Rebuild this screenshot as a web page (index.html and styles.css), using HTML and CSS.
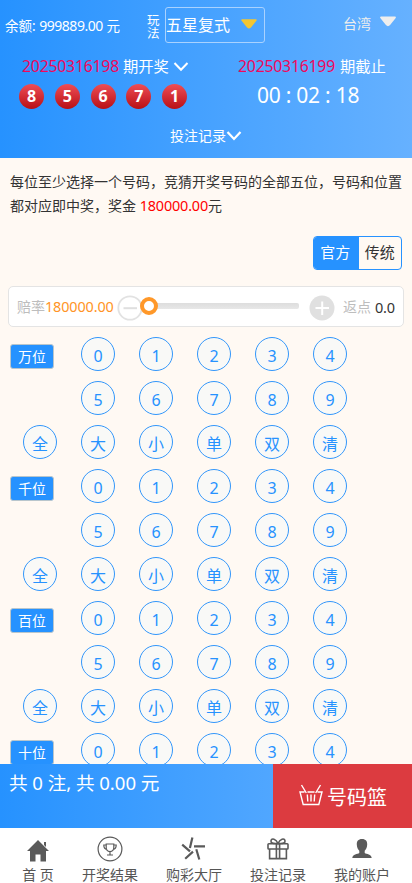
FILE: index.html
```html
<!DOCTYPE html>
<html lang="zh-CN">
<head>
<meta charset="utf-8">
<meta name="viewport" content="width=device-width, initial-scale=1">
<title>五星复式</title>
<link rel="stylesheet" href="styles.css">
</head>
<body>
<header class="header">
  <div class="topbar">
    <span class="balance">余额: <span class="balance-num">999889.00</span> 元</span>
    <span class="play-label">玩法</span>
    <div class="play-select"><span>五星复式</span><svg class="tri" width="18" height="10" viewBox="0 0 18 10"><path d="M2 1H16L10.4 8Q9 9.3 7.6 8Z" fill="#f4c632" stroke="#f4c632" stroke-width="1.5" stroke-linejoin="round"/></svg></div>
    <div class="region"><span>台湾</span><svg width="18" height="11" viewBox="0 0 18 11"><path d="M2 1.5H16L10.4 8.5Q9 10 7.6 8.5Z" fill="#eee" stroke="#eee" stroke-width="1.8" stroke-linejoin="round"/></svg></div>
  </div>
  <div class="issues">
    <div class="issue issue-last">
      <div class="issue-title"><span class="issue-no">20250316198</span><span>期开奖</span><svg class="chev" width="16" height="11" viewBox="0 0 16 11"><path d="M1.5 2L8 8.7L14.5 2" fill="none" stroke="#fff" stroke-width="2"/></svg></div>
      <div class="balls"><b>8</b><b>5</b><b>6</b><b>7</b><b>1</b></div>
    </div>
    <div class="issue issue-next">
      <div class="issue-title"><span class="issue-no">20250316199</span><span>期截止</span></div>
      <div class="clock">00 : 02 : 18</div>
    </div>
  </div>
  <div class="records"><span>投注记录</span><svg width="16" height="12" viewBox="0 0 16 12"><path d="M1.5 2L8 9L14.5 2" fill="none" stroke="#fff" stroke-width="2.2"/></svg></div>
</header>
<main class="main">
  <p class="rule">每位至少选择一个号码，竞猜开奖号码的全部五位，号码和位置<br>都对应即中奖，奖金 <span class="prize">180000.00</span>元</p>
  <div class="tabs"><span class="tab tab-on">官方</span><span class="tab">传统</span></div>
  <div class="odds">
    <span class="muted">赔率</span><span class="odds-num">180000.00</span>
    <svg class="minus" width="26" height="26" viewBox="0 0 26 26"><circle cx="13" cy="13" r="11.7" fill="#fff" stroke="#e2e2e2" stroke-width="1.8"/><path d="M6.5 13.2H20" stroke="#dfdfdf" stroke-width="2"/></svg>
    <div class="slider"><i class="track"></i><i class="knob"></i></div>
    <svg class="plus" width="26" height="26" viewBox="0 0 26 26"><circle cx="13" cy="13" r="12.5" fill="#e0e0e0"/><path d="M6.5 13H20M13.2 6.5V20" stroke="#fff" stroke-width="2"/></svg>
    <span class="muted rebate">返点</span><span class="rebate-num">0.0</span>
  </div>
  <div class="board">
    <span class="place">万位</span><i class="n">0</i><i class="n">1</i><i class="n">2</i><i class="n">3</i><i class="n">4</i>
    <span></span><i class="n">5</i><i class="n">6</i><i class="n">7</i><i class="n">8</i><i class="n">9</i>
    <i class="n">全</i><i class="n">大</i><i class="n">小</i><i class="n">单</i><i class="n">双</i><i class="n">清</i>
    <span class="place">千位</span><i class="n">0</i><i class="n">1</i><i class="n">2</i><i class="n">3</i><i class="n">4</i>
    <span></span><i class="n">5</i><i class="n">6</i><i class="n">7</i><i class="n">8</i><i class="n">9</i>
    <i class="n">全</i><i class="n">大</i><i class="n">小</i><i class="n">单</i><i class="n">双</i><i class="n">清</i>
    <span class="place">百位</span><i class="n">0</i><i class="n">1</i><i class="n">2</i><i class="n">3</i><i class="n">4</i>
    <span></span><i class="n">5</i><i class="n">6</i><i class="n">7</i><i class="n">8</i><i class="n">9</i>
    <i class="n">全</i><i class="n">大</i><i class="n">小</i><i class="n">单</i><i class="n">双</i><i class="n">清</i>
    <span class="place">十位</span><i class="n">0</i><i class="n">1</i><i class="n">2</i><i class="n">3</i><i class="n">4</i>
  </div>
</main>
<section class="summary">
  <div class="total">共 0 注, 共 0.00 元</div>
  <div class="basket">
    <svg width="24" height="22" viewBox="0 0 24 22" fill="none" stroke="#fff" stroke-width="1.4"><path d="M5.5 8H1L4.2 20.5H19.8L23 8H18.5M8.5 8H15.5M2.5 1L7.3 9M21.5 1L16.7 9M8.3 10.5L8.8 17.5M12 10.5V17.5M15.7 10.5L15.2 17.5"/></svg>
    <span>号码篮</span>
  </div>
</section>
<nav class="nav">
  <a class="nav-item"><svg width="28" height="28" viewBox="0 0 28 28" fill="#5a5a5a"><path d="M14 4L25 15H22V25.5H16.5V18.5H11.5V25.5H6V15H3Z"/><path d="M20 6H22V11L20 9Z"/></svg><span>首 页</span></a>
  <a class="nav-item"><svg width="28" height="28" viewBox="0 0 28 28" fill="none" stroke="#5a5a5a" stroke-width="1.2"><circle cx="14" cy="13" r="11.9"/><path d="M10.2 8H17.8V11.5Q17.8 15.3 14 15.6Q10.2 15.3 10.2 11.5ZM10 9H7.8Q7.8 13 10.8 13.3M18 9H20.2Q20.2 13 17.2 13.3M14 15.6V18.5M11 19H17"/></svg><span>开奖结果</span></a>
  <a class="nav-item"><svg width="28" height="28" viewBox="0 0 28 28" fill="none" stroke="#5a5a5a" stroke-width="2.2"><path d="M12.4 1.5L9.9 12M14 10.3H25M16.3 13.2L19.3 23.5M13 15.6L5.2 22.7M10 15.4L2.2 8.6"/></svg><span>购彩大厅</span></a>
  <a class="nav-item"><svg width="28" height="28" viewBox="0 0 28 28" fill="none" stroke="#5a5a5a" stroke-width="1.6"><rect x="4" y="7.8" width="20" height="5.2" rx=".8"/><path d="M5.6 13V22.6H22.4V13M12.4 8V22.5M15.6 8V22.5M13 7.5Q6.5 8 7 4.8Q7.5 2.5 10 3.2Q12.5 4 14 7.5Q15.5 4 18 3.2Q20.5 2.5 21 4.8Q21.5 8 15 7.5"/></svg><span>投注记录</span></a>
  <a class="nav-item"><svg width="28" height="28" viewBox="0 0 28 28" fill="#5a5a5a"><path d="M14 3C17.8 3 19.3 5.2 19.2 8.6C19.1 12 17.8 13.6 16.7 14.8V17C18.5 18.2 23.5 18.2 23.7 22H4.3C4.5 18.2 9.5 18.2 11.3 17V14.8C10.2 13.6 8.9 12 8.8 8.6C8.7 5.2 10.2 3 14 3Z"/></svg><span>我的账户</span></a>
</nav>
</body>
</html>
```
FILE: styles.css
```css
* { box-sizing: border-box; }
body {
  margin: 0;
  height: 883px;
  overflow: hidden;
  display: flex;
  flex-direction: column;
  background: #fff9f3;
  color: #333;
  font: 14px/20px "Noto Sans", "Noto Sans CJK SC", sans-serif;
  white-space: nowrap;
}
svg { display: block; flex: none; }
i { font-style: normal; }
.header {
  flex: none;
  height: 158px;
  color: #fff;
  background: linear-gradient(90deg, #2692ff, #66b1ff);
}
.topbar { display: flex; height: 50px; padding-top: 7px; align-items: flex-start; }
.balance { width: 147px; padding: 9px 0 0 5px; font-size: 13.5px; }
.balance-num { font-size: 14px; letter-spacing: -.45px; }
.play-label { width: 18px; padding-top: 7px; font-size: 12.5px; line-height: 13px; white-space: normal; padding-right: 5px; }
.play-select {
  display: flex;
  align-items: center;
  justify-content: space-between;
  width: 100px;
  height: 36px;
  padding: 0 6px 0 0;
  border: 1px solid #a9d2ff;
  border-radius: 3px;
  font-size: 16px;
}
.tri { margin-top: -3px; }
.region { display: flex; margin-left: 78px; padding-top: 7px; gap: 8px; color: #eee; }
.region svg { margin-top: 2px; }
.issues { display: flex; height: 76px; }
.issue-last { width: 238px; padding-left: 22px; }
.issue-title { display: flex; height: 33px; line-height: 33px; font-size: 15.3px; gap: 5px; }
.issue-no { color: #f0085c; width: 97px; font-size: 15.8px; letter-spacing: -.22px; }
.issue-last .issue-title { gap: 4px; }
.chev { margin-top: 11px; }
.balls { display: flex; gap: 10.8px; margin: 1px 0 0 -3px; }
.balls b {
  width: 25px;
  height: 25px;
  border-radius: 50%;
  background: linear-gradient(#ee4d55, #b81016);
  font-size: 16px;
  line-height: 25px;
  text-align: center;
}
.clock { margin-left: 19px; font-size: 21px; line-height: 24px; letter-spacing: -.25px; }
.records { display: flex; padding-left: 170px; line-height: 20px; }
.records svg { margin-top: 4px; }
.main { flex: 1; min-height: 0; overflow: hidden; }
.rule { margin: 12px 0 0 10px; line-height: 24px; }
.prize { color: #f00; font-size: 14.4px; letter-spacing: -.15px; }
.tabs {
  display: flex;
  width: 89px;
  height: 34px;
  margin: 18px 0 0 313px;
  border: 1px solid #2692ff;
  border-radius: 4px;
  overflow: hidden;
  background: #fff9f3;
  font-size: 15px;
  line-height: 31px;
}
.tab { width: 43px; text-align: center; }
.tab-on { width: 45px; padding-right: 2px; color: #fff; background: #2692ff; }
.odds {
  display: flex;
  align-items: center;
  height: 41px;
  margin: 16px 8px 0;
  padding-left: 8px;
  border: 1px solid #e4e4e4;
  border-radius: 5px;
  background: #fff;
}
.muted { color: #bdbdbd; }
.odds-num { width: 72px; color: #ff9426; font-size: 14.4px; letter-spacing: -.12px; }
.minus { margin: 2px 0 0 0; }
.slider { display: flex; align-items: center; width: 159px; margin-left: -3px; }
.track { width: 100%; height: 6px; border-radius: 2px; background: linear-gradient(#ddd, #e7e7e7); margin-top: -1px; }
.knob { flex: none; width: 18px; height: 18px; margin: -2px 0 0 -159px; border: 4px solid #ff9829; border-radius: 50%; background: #fff; }
.plus { margin: 2px 0 0 10px; }
.rebate { margin-left: 8px; }
.rebate-num { margin-left: 4px; font-size: 14.5px; letter-spacing: -.2px; }
.board {
  display: grid;
  grid-template-columns: repeat(6, 34px);
  grid-auto-rows: 34px;
  gap: 10px 24px;
  margin: 10px 0 0 23px;
}
.n {
  border: 1px solid #3397fb;
  border-radius: 50%;
  background: #f9f9f7;
  color: #2692ff;
  font-size: 16px;
  line-height: 37px;
  text-align: center;
}
.place {
  width: 44px;
  height: 25px;
  margin: 7px 0 0 -13px;
  border: 1px solid #b9c6cc;
  border-radius: 3px;
  background: #2692ff;
  color: #fff;
  line-height: 24px;
  text-align: center;
}
.summary { display: flex; flex: none; height: 64px; color: #fff; background: linear-gradient(90deg, #2692ff, #66b1ff); }
.total { width: 273px; padding: 6px 0 0 9px; font-size: 18.6px; line-height: 26px; letter-spacing: -.05px; }
.basket { display: flex; flex: 1; padding: 20px 0 0 26px; gap: 4px; background: #dc3b40; font-size: 20px; line-height: 27px; }
.nav {
  display: grid;
  grid-template-columns: 60px repeat(4, 84px);
  flex: none;
  height: 55px;
  padding: 8px 0 0 8px;
  background: #fff;
  color: #555;
}
.nav-item { display: flex; flex-direction: column; align-items: center; }
.nav-item span { margin-top: 1px; line-height: 20px; }
```
